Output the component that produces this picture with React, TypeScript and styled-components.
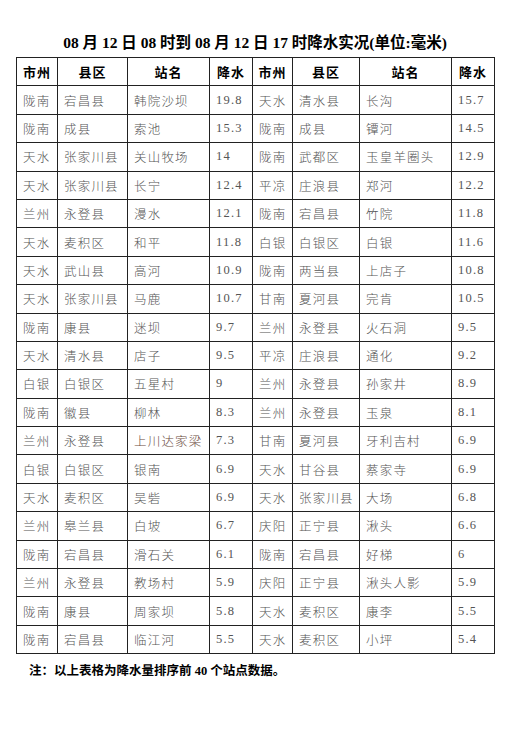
import React from 'react';
import styled, { createGlobalStyle } from 'styled-components';

const GlobalStyle = createGlobalStyle`
  html, body {
    margin: 0;
    padding: 0;
    background: #fff;
  }
  body {
    font-family: "Liberation Serif", "Noto Sans CJK SC", serif;
  }
`;

const Page = styled.div`
  width: 506px;
  padding: 33px 0 0 16px;
  box-sizing: border-box;
`;

const Title = styled.h1`
  margin: 0 0 4px;
  width: 478px;
  text-align: center;
  font-size: 15.5px;
  line-height: 20px;
  font-weight: 700;
  color: #000;
`;

const Table = styled.table`
  width: 478px;
  border-collapse: collapse;
  table-layout: fixed;
  border: 1.5px solid #666;
`;

const Row = styled.tr`
  height: 28.4px;
`;

const HeadCell = styled.th`
  border: 1px solid #222;
  padding: 0;
  text-align: center;
  font-size: 13px;
  font-weight: 700;
  letter-spacing: 1px;
  color: #000;
`;

const Cell = styled.td<{ $tint?: boolean }>`
  border: 1px solid #222;
  padding: 0 0 0 6px;
  text-align: left;
  font-size: 12.5px;
  font-weight: 300;
  letter-spacing: 1.2px;
  white-space: nowrap;
  overflow: hidden;
  color: ${(p) => (p.$tint ? '#6a4a3c' : '#555')};
`;

const Note = styled.p`
  margin: 6px 0 0 13px;
  font-size: 12.5px;
  font-weight: 700;
  color: #000;
`;

const widths = [41, 70, 82, 43, 40, 67, 92, 43];
const heads = ['市州', '县区', '站名', '降水', '市州', '县区', '站名', '降水'];

const rows: string[][] = [
  ['陇南', '宕昌县', '韩院沙坝', '19.8', '天水', '清水县', '长沟', '15.7'],
  ['陇南', '成县', '索池', '15.3', '陇南', '成县', '镡河', '14.5'],
  ['天水', '张家川县', '关山牧场', '14', '陇南', '武都区', '玉皇羊圈头', '12.9'],
  ['天水', '张家川县', '长宁', '12.4', '平凉', '庄浪县', '郑河', '12.2'],
  ['兰州', '永登县', '漫水', '12.1', '陇南', '宕昌县', '竹院', '11.8'],
  ['天水', '麦积区', '和平', '11.8', '白银', '白银区', '白银', '11.6'],
  ['天水', '武山县', '高河', '10.9', '陇南', '两当县', '上店子', '10.8'],
  ['天水', '张家川县', '马鹿', '10.7', '甘南', '夏河县', '完肯', '10.5'],
  ['陇南', '康县', '迷坝', '9.7', '兰州', '永登县', '火石洞', '9.5'],
  ['天水', '清水县', '店子', '9.5', '平凉', '庄浪县', '通化', '9.2'],
  ['白银', '白银区', '五星村', '9', '兰州', '永登县', '孙家井', '8.9'],
  ['陇南', '徽县', '柳林', '8.3', '兰州', '永登县', '玉泉', '8.1'],
  ['兰州', '永登县', '上川达家梁', '7.3', '甘南', '夏河县', '牙利吉村', '6.9'],
  ['白银', '白银区', '银南', '6.9', '天水', '甘谷县', '蔡家寺', '6.9'],
  ['天水', '麦积区', '吴砦', '6.9', '天水', '张家川县', '大场', '6.8'],
  ['兰州', '皋兰县', '白坡', '6.7', '庆阳', '正宁县', '湫头', '6.6'],
  ['陇南', '宕昌县', '滑石关', '6.1', '陇南', '宕昌县', '好梯', '6'],
  ['兰州', '永登县', '教场村', '5.9', '庆阳', '正宁县', '湫头人影', '5.9'],
  ['陇南', '康县', '周家坝', '5.8', '天水', '麦积区', '康李', '5.5'],
  ['陇南', '宕昌县', '临江河', '5.5', '天水', '麦积区', '小坪', '5.4'],
];

export default function App() {
  return (
    <Page>
      <GlobalStyle />
      <Title>08 月 12 日 08 时到 08 月 12 日 17 时降水实况(单位:毫米)</Title>
      <Table>
        <colgroup>
          {widths.map((w, i) => (
            <col key={i} style={{ width: w }} />
          ))}
        </colgroup>
        <thead>
          <Row>
            {heads.map((h, i) => (
              <HeadCell key={i}>{h}</HeadCell>
            ))}
          </Row>
        </thead>
        <tbody>
          {rows.map((r, i) => (
            <Row key={i}>
              {r.map((c, j) => (
                <Cell key={j} $tint={c === '上川达家梁'}>
                  {c}
                </Cell>
              ))}
            </Row>
          ))}
        </tbody>
      </Table>
      <Note>注：以上表格为降水量排序前 40 个站点数据。</Note>
    </Page>
  );
}
